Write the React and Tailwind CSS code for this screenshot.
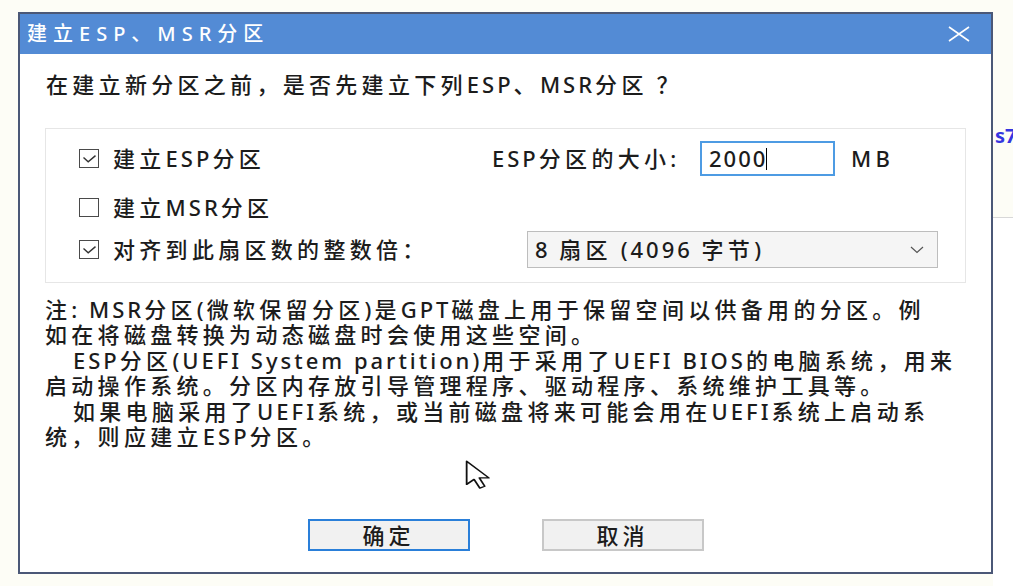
import React from "react";

// latin runs get a bit less letter-spacing than the CJK ones
const T = ({ children }) =>
  children.split(/([\x20-\x7e]+)/).map((part, i) =>
    /[\x20-\x7e]/.test(part) ? (
      <span key={i} className="tracking-[3px]">
        {part}
      </span>
    ) : (
      part
    )
  );

const Check = ({ checked }) => (
  <span className="flex h-[19px] w-[20px] shrink-0 items-center justify-center border-[1.5px] border-[#4a4a4a] bg-white">
    {checked && (
      <svg width="15" height="10" viewBox="0 0 15 10">
        <path d="M1.5 3.5 L6.2 7.8 L13.5 1.6" fill="none" stroke="#333" strokeWidth="1.4" />
      </svg>
    )}
  </span>
);

const notes = [
  { text: "注: MSR分区(微软保留分区)是GPT磁盘上用于保留空间以供备用的分区。例", indent: false },
  { text: "如在将磁盘转换为动态磁盘时会使用这些空间。", indent: false },
  { text: "ESP分区(UEFI System partition)用于采用了UEFI BIOS的电脑系统，用来", indent: true },
  { text: "启动操作系统。分区内存放引导管理程序、驱动程序、系统维护工具等。", indent: false },
  { text: "如果电脑采用了UEFI系统，或当前磁盘将来可能会用在UEFI系统上启动系", indent: true },
  { text: "统，则应建立ESP分区。", indent: false },
];

export default function App() {
  return (
    <div className="flex h-[586px] w-[1013px] overflow-hidden bg-[#fdfdf6] font-[family-name:'Noto_Sans','Noto_Sans_CJK_SC',sans-serif] font-medium text-[#1c1c1c]">
      <div className="w-[18px] shrink-0" />

      {/* dialog */}
      <div className="relative mt-[12px] flex h-[562px] w-[975px] shrink-0 flex-col border-2 border-[#4b5877] bg-white">
        <div className="flex h-[40px] items-center justify-between bg-[#538bd5] pl-[7px] pr-[21px] text-white">
          <span className="text-[20px] leading-none tracking-[6px]">建立ESP、MSR分区</span>
          <svg width="22" height="16" viewBox="0 0 22 16">
            <path d="M1 1 L21 15 M21 1 L1 15" stroke="#fff" strokeWidth="1.6" fill="none" />
          </svg>
        </div>

        <div className="flex flex-1 flex-col px-[25px] pt-[18px] text-[22px] leading-[25px] tracking-[4.3px]">
          <p className="pl-px">
            <T>在建立新分区之前，是否先建立下列ESP、MSR分区 ？</T>
          </p>

          <div className="mt-[31px] border border-[#e6e6e6] pb-[14px] pl-[33px] pt-[12px]">
            <div className="flex h-[35px] items-center">
              <div className="flex w-[413px] items-center">
                <Check checked />
                <span className="ml-[14px]">
                  <T>建立ESP分区</T>
                </span>
              </div>
              <span className="w-[208px]">
                <T>ESP分区的大小:</T>
              </span>
              <div className="flex h-[35px] w-[135px] items-center border-2 border-[#4d9be3] pl-[7px] tracking-[2px]">
                2000
                <span className="ml-[-1px] h-[22px] w-px bg-black" />
              </div>
              <span className="ml-[16px]">MB</span>
            </div>

            <div className="mt-[19px] flex h-[25px] items-center">
              <Check />
              <span className="ml-[14px]">
                <T>建立MSR分区</T>
              </span>
            </div>

            <div className="mt-[11px] flex h-[37px] items-center">
              <div className="flex w-[448px] items-center">
                <Check checked />
                <span className="ml-[14px]">对齐到此扇区数的整数倍：</span>
              </div>
              <div className="flex h-[37px] w-[411px] items-center justify-between border border-[#bdbdbd] bg-[#f5f5f5] pl-[7px] pr-[13px]">
                <span>
                  <T>8 扇区 (4096 字节)</T>
                </span>
                <svg width="14" height="8" viewBox="0 0 14 8">
                  <path d="M1 1 L7 6.5 L13 1" fill="none" stroke="#555" strokeWidth="1.2" />
                </svg>
              </div>
            </div>
          </div>

          <div className="mt-[14px] leading-[25.4px]">
            {notes.map((n, i) => (
              <p key={i} className={`whitespace-nowrap ${n.indent ? "pl-[28px]" : ""}`}>
                <T>{n.text}</T>
              </p>
            ))}
          </div>

          <div className="mt-[70px] flex justify-center gap-[72px]">
            <button className="flex h-[32px] w-[162px] items-center justify-center border-2 border-[#2a7fd9] bg-[#f1f1f1] text-[22px] tracking-[4px]">
              确定
            </button>
            <button className="flex h-[32px] w-[162px] items-center justify-center border-2 border-[#c8c8c8] bg-[#f1f1f1] text-[22px] tracking-[4px]">
              取消
            </button>
          </div>
        </div>

        {/* mouse pointer */}
        <svg
          className="absolute left-[445px] top-[446px]"
          width="28"
          height="30"
          viewBox="0 0 17 24"
          preserveAspectRatio="none"
        >
          <path
            d="M1 1 L1 19.5 L5.5 15.5 L9 22.5 L12 21 L8.7 14.3 L14.5 14.3 Z"
            fill="#fff"
            stroke="#111"
            strokeWidth="1.1"
            strokeLinejoin="round"
          />
        </svg>
      </div>

      {/* strip of the window behind */}
      <div className="flex flex-1 flex-col">
        <div className="h-[218px] border-b border-[#d8d8d8] pl-[2px] pt-[124px] text-[20px] font-bold leading-[24px] text-[#3535e0]">
          s7
        </div>
        <div className="flex-1 bg-white" />
      </div>
    </div>
  );
}
